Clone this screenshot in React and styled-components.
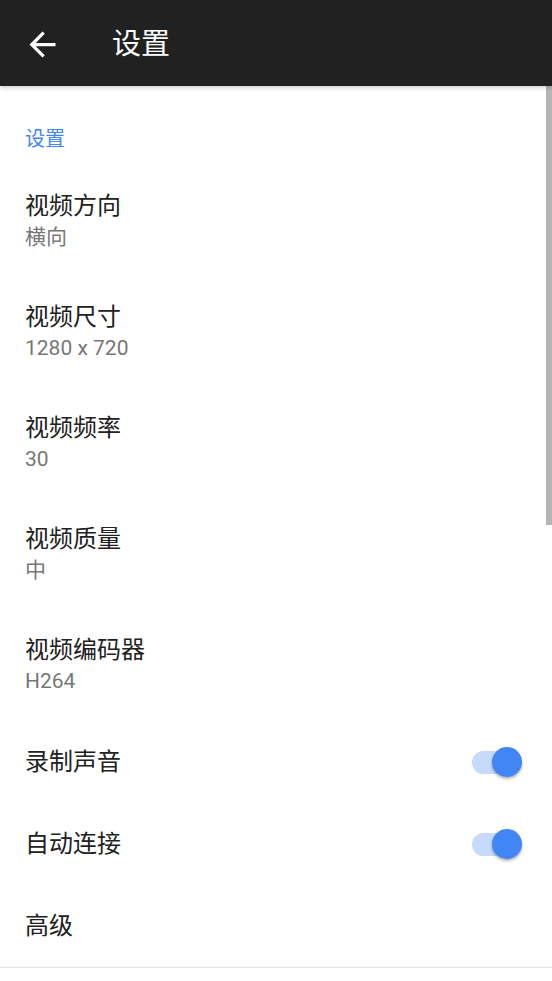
import React from 'react'
import styled, { createGlobalStyle } from 'styled-components'

const GlobalStyle = createGlobalStyle`
  html, body {
    margin: 0;
    padding: 0;
    background: #fff;
  }
  body {
    font-family: Roboto, "Noto Sans CJK SC", sans-serif;
  }
`

const settings = [
  { title: '视频方向', value: '横向' },
  { title: '视频尺寸', value: '1280 x 720' },
  { title: '视频频率', value: '30' },
  { title: '视频质量', value: '中' },
  { title: '视频编码器', value: 'H264' },
  { title: '录制声音', toggle: true },
  { title: '自动连接', toggle: true },
  { title: '高级' },
]

const Screen = styled.div`
  position: relative;
  width: 552px;
  height: 981px;
  overflow: hidden;
  background: #fff;
`

const Toolbar = styled.header`
  position: relative;
  z-index: 2;
  height: 86px;
  display: flex;
  align-items: center;
  background: #212121;
  box-shadow: 0 2px 4px rgba(0, 0, 0, 0.18);
`

const BackBtn = styled.button`
  width: 39px;
  height: 39px;
  margin: 2px 0 0 23px;
  padding: 0;
  border: none;
  background: none;
  display: flex;
  color: #fff;
`

const Title = styled.h1`
  margin: 3px 0 0 50px;
  font-size: 29px;
  font-weight: 400;
  color: #fff;
  line-height: 1;
`

const List = styled.div`
  display: flex;
  flex-direction: column;
  border-bottom: 1px solid #e3e3e3;
`

const SectionHeader = styled.div`
  height: 80px;
  box-sizing: border-box;
  padding: 39px 25px 0;
  font-size: 20px;
  line-height: 28px;
  color: #4285f4;
`

const Item = styled.div`
  display: flex;
  align-items: center;
  justify-content: space-between;
  box-sizing: border-box;
  height: ${p => (p.$twoLine ? '111px' : '82px')};
  padding: 0 30px 0 25px;
`

const Texts = styled.div`
  display: flex;
  flex-direction: column;
  margin-top: ${p => (p.$twoLine ? '0' : '0')};
`

const ItemTitle = styled.div`
  font-size: 24px;
  line-height: 31px;
  color: #212121;
`

const ItemValue = styled.div`
  font-size: 21px;
  line-height: 30px;
  color: #777;
`

const Switch = styled.div`
  position: relative;
  width: 50px;
  height: 30px;
  display: flex;
  align-items: center;
`

const Track = styled.div`
  width: 48px;
  height: 23px;
  border-radius: 12px;
  background: #c6dafc;
`

const Thumb = styled.div`
  position: absolute;
  right: 0;
  top: 0;
  width: 30px;
  height: 30px;
  border-radius: 50%;
  background: #4285f4;
  box-shadow: 0 2px 3px rgba(0, 0, 0, 0.3);
`

const Scrollbar = styled.div`
  position: absolute;
  right: 0;
  top: 86px;
  width: 6px;
  height: 439px;
  background: #b5b5b5;
`

const Toggle = () => (
  <Switch>
    <Track />
    <Thumb />
  </Switch>
)

export default function App() {
  return (
    <>
      <GlobalStyle />
      <Screen>
        <Toolbar>
          <BackBtn aria-label="返回">
            <svg width="39" height="39" viewBox="0 0 24 24" fill="currentColor">
              <path d="M20 11H7.83l5.59-5.59L12 4l-8 8 8 8 1.41-1.41L7.83 13H20v-2z" />
            </svg>
          </BackBtn>
          <Title>设置</Title>
        </Toolbar>
        <List>
          <SectionHeader>设置</SectionHeader>
          {settings.map(s => (
            <Item key={s.title} $twoLine={!!s.value}>
              <Texts $twoLine={!!s.value}>
                <ItemTitle>{s.title}</ItemTitle>
                {s.value && <ItemValue>{s.value}</ItemValue>}
              </Texts>
              {s.toggle && <Toggle />}
            </Item>
          ))}
        </List>
        <Scrollbar />
      </Screen>
    </>
  )
}
